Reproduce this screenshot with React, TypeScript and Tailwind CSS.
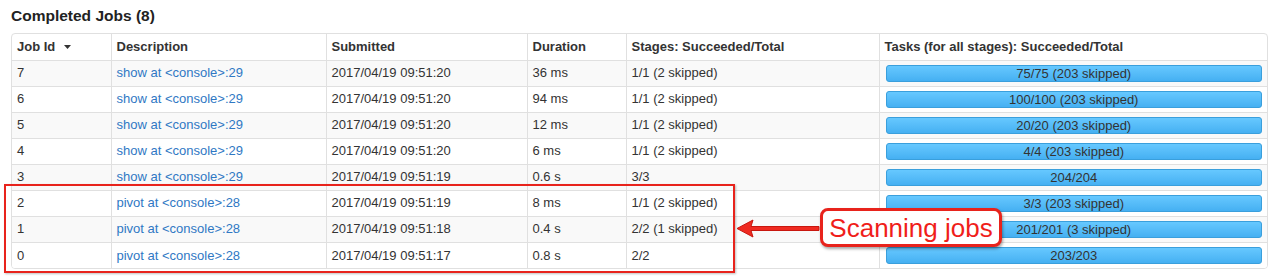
const jobs = [
  { id: 7, desc: 'show at <console>:29', submitted: '2017/04/19 09:51:20', duration: '36 ms', stages: '1/1 (2 skipped)', tasks: '75/75 (203 skipped)' },
  { id: 6, desc: 'show at <console>:29', submitted: '2017/04/19 09:51:20', duration: '94 ms', stages: '1/1 (2 skipped)', tasks: '100/100 (203 skipped)' },
  { id: 5, desc: 'show at <console>:29', submitted: '2017/04/19 09:51:20', duration: '12 ms', stages: '1/1 (2 skipped)', tasks: '20/20 (203 skipped)' },
  { id: 4, desc: 'show at <console>:29', submitted: '2017/04/19 09:51:20', duration: '6 ms', stages: '1/1 (2 skipped)', tasks: '4/4 (203 skipped)' },
  { id: 3, desc: 'show at <console>:29', submitted: '2017/04/19 09:51:19', duration: '0.6 s', stages: '3/3', tasks: '204/204' },
  { id: 2, desc: 'pivot at <console>:28', submitted: '2017/04/19 09:51:19', duration: '8 ms', stages: '1/1 (2 skipped)', tasks: '3/3 (203 skipped)' },
  { id: 1, desc: 'pivot at <console>:28', submitted: '2017/04/19 09:51:18', duration: '0.4 s', stages: '2/2 (1 skipped)', tasks: '201/201 (3 skipped)' },
  { id: 0, desc: 'pivot at <console>:28', submitted: '2017/04/19 09:51:17', duration: '0.8 s', stages: '2/2', tasks: '203/203' },
];

const headers = ['Description', 'Submitted', 'Duration', 'Stages: Succeeded/Total'];

export default function App() {
  return (
    <div className="relative w-[1280px] h-[278px] bg-white text-[#333] font-['Liberation_Sans',Arial,sans-serif] overflow-hidden">
      <h4 className="pl-[11px] pt-[6px] h-[33px] text-[15.5px] leading-[20px] font-bold text-[#222]">Completed Jobs (8)</h4>

      <div className="ml-[11px] w-[1257px] border border-[#e0e0e0] rounded-[4px] overflow-hidden">
        <table className="w-full table-fixed border-collapse text-[13px]">
          <colgroup>
            <col className="w-[99px]" />
            <col className="w-[215px]" />
            <col className="w-[201px]" />
            <col className="w-[99px]" />
            <col className="w-[253px]" />
            <col />
          </colgroup>
          <thead>
            <tr className="h-[26px]">
              <th className="px-[5px] py-0 text-left font-bold border-r border-b border-[#e0e0e0]">
                <span className="inline-flex items-center gap-[9px]">
                  Job Id
                  <svg width="7" height="4" viewBox="0 0 7 4"><path d="M0 0h7L3.5 4z" fill="#333" /></svg>
                </span>
              </th>
              {headers.map((h) => (
                <th key={h} className="px-[5px] py-0 text-left font-bold border-r border-b border-[#e0e0e0]">{h}</th>
              ))}
              <th className="px-[5px] py-0 text-left font-bold border-b border-[#e0e0e0]">Tasks (for all stages): Succeeded/Total</th>
            </tr>
          </thead>
          <tbody>
            {jobs.map((job, i) => {
              const last = i === jobs.length - 1;
              const cell = last ? 'px-[5px] py-0 border-r border-[#e0e0e0]' : 'px-[5px] py-0 border-r border-b border-[#e0e0e0]';
              return (
                <tr key={job.id} className={i % 2 === 0 ? 'h-[26px] bg-[#f9f9f9]' : 'h-[26px] bg-white'}>
                  <td className={cell}>{job.id}</td>
                  <td className={cell}>
                    <a className="text-[#2f78c4]">{job.desc}</a>
                  </td>
                  <td className={cell}>{job.submitted}</td>
                  <td className={cell}>{job.duration}</td>
                  <td className={cell}>{job.stages}</td>
                  <td className={last ? 'pl-[6px] pr-[5px] py-0' : 'pl-[6px] pr-[5px] py-0 border-b border-[#e0e0e0]'}>
                    <div className="h-[17px] rounded-[3px] border border-[#3a9fdc] bg-gradient-to-b from-[#66c8ff] to-[#45b0f2] text-center text-[13px] leading-[15px] text-[#333]">
                      {job.tasks}
                    </div>
                  </td>
                </tr>
              );
            })}
          </tbody>
        </table>
      </div>

      {/* annotation: highlight box */}
      <div className="absolute left-[4px] top-[184px] w-[731px] h-[89px] border-2 border-[#e8231c] shadow-[1px_1px_2px_rgba(0,0,0,0.25)]" />

      {/* annotation: arrow */}
      <svg className="absolute left-[735px] top-[218px]" width="86" height="22" viewBox="0 0 86 22">
        <path d="M2 10.5 L18 2 L16 8.5 L84 8.5 L84 12.5 L16 12.5 L18 19 Z" fill="#ef2a21" stroke="#c8170f" strokeWidth="1" strokeLinejoin="round" />
      </svg>

      {/* annotation: callout */}
      <div className="absolute left-[820px] top-[208px] w-[182px] h-[39px] border-[3px] border-[#e8231c] rounded-[8px] bg-white shadow-[1px_2px_3px_rgba(0,0,0,0.35)] flex items-center justify-center">
        <span className="text-[26px] leading-[30px] text-[#f01e1a]">Scanning jobs</span>
      </div>
    </div>
  );
}
